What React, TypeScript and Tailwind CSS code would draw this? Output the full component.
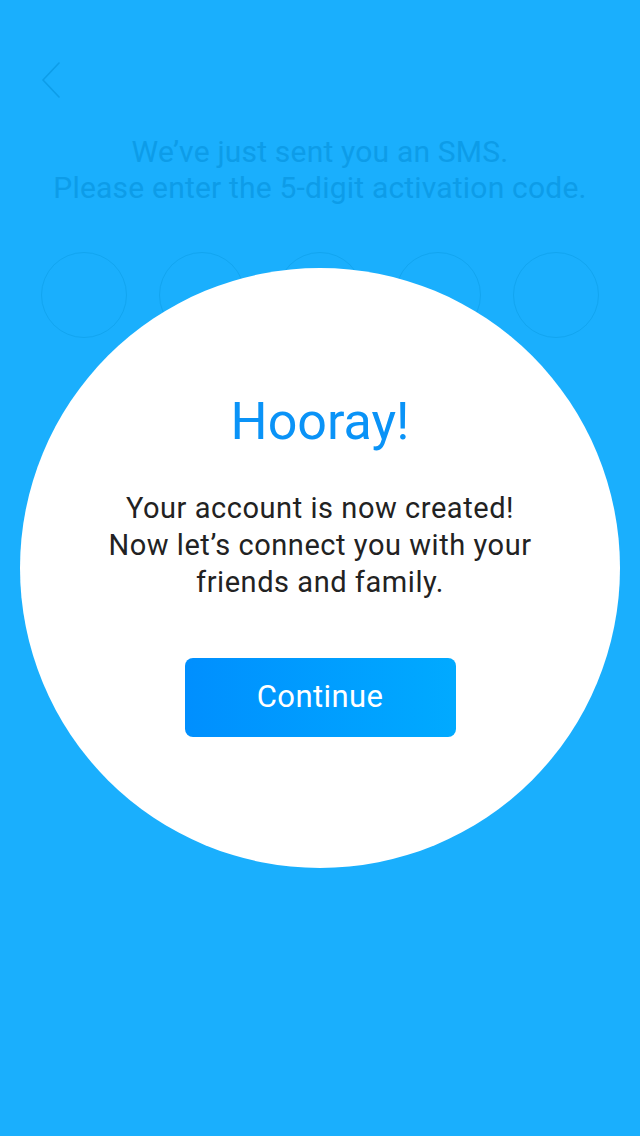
import React from "react";

export default function App() {
  const font = { fontFamily: "Roboto, 'Open Sans', sans-serif" };
  return (
    <div className="relative w-[640px] h-[1136px] bg-[#1aaffd] overflow-hidden" style={font}>
      {/* background screen */}
      <div className="flex flex-col">
        <div className="h-[62px]" />
        <div className="pl-[41px] h-[34px]">
          <svg width="20" height="36" viewBox="0 0 20 36" fill="none">
            <path d="M18 1 L2 18 L18 35" stroke="#0e9de8" strokeWidth="1.6" strokeLinecap="round" strokeLinejoin="round" />
          </svg>
        </div>
        <div className="mt-[38px] flex flex-col items-center text-[30px] leading-[36px] text-[#0d9ce8] tracking-[0.2px]">
          <div>We’ve just sent you an SMS.</div>
          <div>Please enter the 5-digit activation code.</div>
        </div>
        <div className="mt-[46px] flex justify-between px-[41px]">
          {[0, 1, 2, 3, 4].map((i) => (
            <div key={i} className="w-[86px] h-[86px] rounded-full border-[1.5px] border-[#12a5f0]" />
          ))}
        </div>
      </div>

      {/* modal circle */}
      <div className="absolute left-[20px] top-[268px] w-[600px] h-[600px] rounded-full bg-white flex flex-col items-center">
        <div className="mt-[124px] text-[52px] leading-[60px] text-[#0a93f7]">Hooray!</div>
        <div className="mt-[38px] text-[29px] leading-[37px] text-[#222222] text-center tracking-[0.55px]">
          <div>Your account is now created!</div>
          <div>Now let’s connect you with your</div>
          <div>friends and family.</div>
        </div>
        <button className="mt-[57px] w-[271px] h-[79px] rounded-[8px] bg-gradient-to-r from-[#008ffe] to-[#01aaff] text-white text-[31px] tracking-[0.4px]">
          Continue
        </button>
      </div>
    </div>
  );
}
